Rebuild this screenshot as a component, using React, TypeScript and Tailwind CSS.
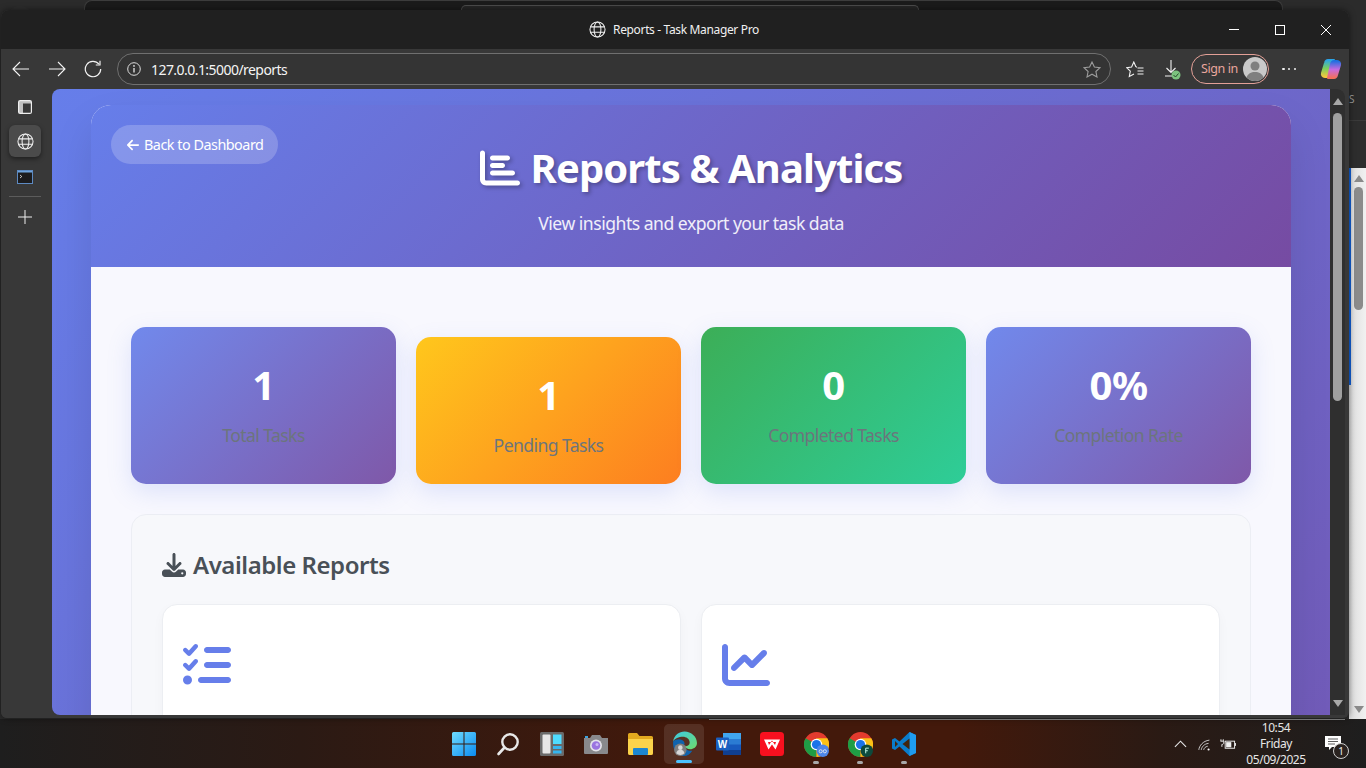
import React from "react";
import { FaArrowLeft, FaChartBar, FaChartLine, FaDownload, FaListCheck } from "react-icons/fa6";

const Globe = ({ size = 18 }: { size?: number }) => (
  <svg width={size} height={size} viewBox="0 0 18 18" fill="none" stroke="currentColor" strokeWidth="1.1">
    <circle cx="9" cy="9" r="8" />
    <ellipse cx="9" cy="9" rx="3.6" ry="8" />
    <path d="M1.6 6.2h14.8M1.6 11.8h14.8" />
  </svg>
);

const Tray = () => (
  <div className="flex items-center h-full text-white ml-auto">
    <svg width="13" height="8" viewBox="0 0 14 8" fill="none" stroke="#e8e8e8" strokeWidth="1.2" className="mr-[11px]">
      <path d="M1 7l6-6 6 6" />
    </svg>
    <svg width="13" height="12" viewBox="0 0 16 14" fill="none" stroke="#d8d8d8" strokeWidth="1.1" className="mr-[9px] mt-[2px]">
      <path d="M1 13C1.500 8 6 2 14 1M4 13c.5-3.500 3.500-7.500 9-8M7 13c.3-2 2-4 5-4.500" />
      <circle cx="13" cy="12.500" r="1.300" fill="#fff" stroke="none" />
    </svg>
    <svg width="16" height="12" viewBox="0 0 17 12" fill="none" stroke="#f0f0f0" strokeWidth="1" className="mr-[8px]">
      <rect x="5.500" y="3" width="10" height="7.500" />
      <rect x="6.500" y="4" width="5.500" height="5.500" fill="#f0f0f0" stroke="none" />
      <path d="M16.500 5v3M1 1v2M3.500 1v2M.5 3h3.500v2c0 1-1 1.500-2 1.500V9" />
    </svg>
    <div className="w-[64px] flex flex-col items-center text-[12px] leading-[16px] text-[#e6e6e6] whitespace-nowrap tracking-[-0.45px]">
      <span>10:54</span>
      <span>Friday</span>
      <span>05/09/2025</span>
    </div>
    <div className="relative w-[28px] h-[24px] ml-[15px] mr-[15px]">
      <svg width="16" height="15" viewBox="0 0 16 15" className="absolute left-[2px] top-[4px]">
        <path d="M0 0h16v11H7l-3 3v-3H0z" fill="#fff" />
        <path d="M3 3h10M3 5.500h10M3 8h7" stroke="#333" strokeWidth="0.8" />
      </svg>
      <span className="absolute left-[10px] top-[11px] w-[16px] h-[16px] rounded-full border border-[#cfcfcf] bg-[#2a2320] text-[10px] leading-[14px] text-center text-[#eee]">1</span>
    </div>
  </div>
);

const TaskIcon = ({ children, active, dot }: { children: React.ReactNode; active?: boolean; dot?: boolean }) => (
  <div className="relative w-[44px] h-[49px] flex items-center justify-center">
    {active && <div className="absolute left-[2px] top-[5px] w-[40px] h-[40px] rounded-[5px] bg-white/10" />}
    <div className="relative mt-[1px] flex">{children}</div>
    {active && <div className="absolute left-[14px] top-[41px] w-[16px] h-[3px] rounded-full bg-[#4cc2ff]" />}
    {dot && <div className="absolute left-[19px] top-[42px] w-[6px] h-[3px] rounded-full bg-[#a8a8a8]" />}
  </div>
);

const Chrome = ({ badge }: { badge: React.ReactNode }) => (
  <svg width="25" height="25" viewBox="0 0 24 24">
    <circle cx="12" cy="12" r="12" fill="#e33b2e" />
    <path d="M12 24A12 12 0 0 1 1.600 6L12 12z" fill="#1f9d45" />
    <path d="M12 24a12 12 0 0 0 10.400-18H12z" fill="#fbc116" />
    <circle cx="12" cy="12" r="5.600" fill="#fff" />
    <circle cx="12" cy="12" r="4.400" fill="#1b73e8" />
    {badge}
  </svg>
);

const TaskBar = () => (
  <div className="relative h-[49px] flex items-center bg-[linear-gradient(90deg,#1e1e1e_0%,#2b1a14_22%,#43190b_50%,#43190b_70%,#2a1a14_85%,#1e1e1e_100%)]">
    <div className="absolute left-[709px] right-[21px] top-0 h-px bg-[#8a8a8a]" />
    <div className="w-[442px] shrink-0" />
    <TaskIcon>
      <svg width="24" height="24" viewBox="0 0 24 24">
        <defs>
          <linearGradient id="win" x1="0" y1="0" x2="1" y2="1">
            <stop offset="0" stopColor="#6fdcff" />
            <stop offset="1" stopColor="#0a8bf0" />
          </linearGradient>
        </defs>
        <path d="M0 1.500A1.500 1.500 0 0 1 1.500 0h10v11.500H0zM12.500 0h10A1.500 1.500 0 0 1 24 1.500v10H12.500zM0 12.500h11.500V24h-10A1.500 1.500 0 0 1 0 22.500zM12.500 12.500H24v10a1.500 1.500 0 0 1-1.500 1.500h-10z" fill="url(#win)" />
      </svg>
    </TaskIcon>
    <TaskIcon>
      <svg width="24" height="24" viewBox="0 0 24 24" fill="none">
        <circle cx="14" cy="10" r="7.700" stroke="#e8e8e8" strokeWidth="2.400" />
        <path d="M8.500 15.500L2.500 22" stroke="#e8e8e8" strokeWidth="2.600" strokeLinecap="round" />
      </svg>
    </TaskIcon>
    <TaskIcon>
      <svg width="24" height="24" viewBox="0 0 24 24">
        <rect width="24" height="24" rx="1.500" fill="#6a6a6a" />
        <rect x="2.500" y="2.500" width="8" height="19" rx="1" fill="#e6e6e6" />
        <rect x="13" y="2.500" width="8.500" height="9.500" fill="#4fdcff" />
        <rect x="13" y="14" width="8.500" height="3" fill="#35b6f0" />
        <rect x="13" y="18.500" width="8.500" height="3" fill="#35b6f0" />
      </svg>
    </TaskIcon>
    <TaskIcon>
      <svg width="24" height="22" viewBox="0 0 24 22">
        <path d="M0 5h6l2-3h8l2 3h6v15a1 1 0 0 1-1 1H1a1 1 0 0 1-1-1z" fill="#88898c" />
        <path d="M1 3h3v2H1z" fill="#3ba4e0" />
        <circle cx="12" cy="12.500" r="6" fill="#e3e3e8" />
        <circle cx="12" cy="12.500" r="4.300" fill="#9a74e0" />
        <circle cx="13" cy="11.500" r="1.500" fill="#cbb8f5" />
      </svg>
    </TaskIcon>
    <TaskIcon>
      <svg width="25" height="22" viewBox="0 0 25 22">
        <path d="M0 1.500A1.500 1.500 0 0 1 1.500 0H9l2.500 3H23.500A1.500 1.500 0 0 1 25 4.500V20a2 2 0 0 1-2 2H2a2 2 0 0 1-2-2z" fill="#e2a91f" />
        <path d="M0 6h25v14a2 2 0 0 1-2 2H2a2 2 0 0 1-2-2z" fill="#fbd34b" />
        <rect x="5" y="15" width="15" height="7" rx="1" fill="#1c86d1" />
      </svg>
    </TaskIcon>
    <TaskIcon active>
      <svg width="25" height="26" viewBox="0 0 24 25">
        <defs>
          <linearGradient id="edge" x1="0" y1="0" x2="1" y2="1">
            <stop offset="0" stopColor="#3bc9e6" />
            <stop offset="1" stopColor="#6fdc6a" />
          </linearGradient>
        </defs>
        <path d="M1 10C2 4 7 .5 12 .5c6.500 0 12 5 12 11 0 4-3.500 6-6.500 6-2.500 0-5-1-5.500-3 2 .5 5-.5 5-3.500 0-3.500-3.500-5.500-6.500-5.500-4 0-8 2-9.500 4.500z" fill="url(#edge)" />
        <path d="M1 10c3-3 10-3 11 1.500.3 1-.5 2-.5 3 .5 3 4 5 8 4.500-2 3.500-5 5-8 5-6 0-11-5-10.500-14z" fill="#0f63ad" />
        <circle cx="8" cy="18" r="6" fill="#7e7e7e" />
        <circle cx="8" cy="16" r="2.200" fill="#d8d8d8" />
        <path d="M4 21.500c.5-2.500 2-3.500 4-3.500s3.500 1 4 3.500a6 6 0 0 1-8 0z" fill="#d8d8d8" />
      </svg>
    </TaskIcon>
    <TaskIcon>
      <svg width="25" height="24" viewBox="0 0 25 24">
        <rect x="7" y="1" width="18" height="22" rx="1" fill="#185abd" />
        <rect x="7" y="1" width="18" height="6" fill="#41a5ee" />
        <rect x="7" y="7" width="18" height="5.500" fill="#2b7cd3" />
        <rect x="7" y="18" width="18" height="5" fill="#103f91" />
        <rect x="0" y="5.500" width="13" height="13" rx="1" fill="#1a5fc0" />
        <text x="6.500" y="15.500" textAnchor="middle" fontSize="10" fontWeight="700" fill="#fff" fontFamily="'Liberation Sans',sans-serif">W</text>
      </svg>
    </TaskIcon>
    <TaskIcon>
      <svg width="24" height="24" viewBox="0 0 24 24">
        <rect width="24" height="24" rx="3.500" fill="#f8101f" />
        <path d="M4 7.500h16l-4.500 10-3.500-5-3.500 5zM8 10l1 3 3-4.500 3 4.500 1-3z" fill="#fff" fillRule="evenodd" />
      </svg>
    </TaskIcon>
    <TaskIcon dot>
      <Chrome badge={<><circle cx="18" cy="18" r="6" fill="#4d86e8" /><circle cx="16" cy="18.500" r="1.500" fill="none" stroke="#eee" strokeWidth="0.800" /><circle cx="20" cy="18.500" r="1.500" fill="none" stroke="#eee" strokeWidth="0.800" /></>} />
    </TaskIcon>
    <TaskIcon dot>
      <Chrome badge={<><circle cx="18" cy="18" r="6" fill="#0d4a3c" /><path d="M17 15.500h3M17 15.500v5M17 18h2" stroke="#cfe" strokeWidth="0.900" fill="none" /></>} />
    </TaskIcon>
    <TaskIcon dot>
      <svg width="24" height="24" viewBox="0 0 24 24">
        <path d="M17.500 0L24 3v18l-6.500 3-10-9.500L3 18l-3-1.500v-9L3 6l4.500 3.500z" fill="#0a7ccb" />
        <path d="M17.500 0L24 3v18l-6.500 3z" fill="#1f9cf0" />
        <path d="M17.500 6.500L10.500 12l7 5.500z" fill="#41250d" />
        <path d="M3 9v6l3-3z" fill="#41250d" />
      </svg>
    </TaskIcon>
    <Tray />
  </div>
);

const StatCard = ({ value, label, tone, shifted }: { value: string; label: string; tone: string; shifted?: boolean }) => (
  <div className={`flex flex-col items-center rounded-[15px] pt-[26px] shadow-[0_8px_25px_rgba(102,126,234,0.18)] ${tone} ${shifted ? "mt-[10px] h-[147px]" : "h-[157px]"}`}>
    <div className="text-[40px] leading-[64px] font-bold text-white tracking-[-0.5px]">{value}</div>
    <div className="mt-[4px] text-[17.6px] leading-[28px] text-[#6c757d] tracking-[-0.6px]">{label}</div>
  </div>
);

const ReportCard = ({ children }: { children: React.ReactNode }) => (
  <div className="h-[140px] rounded-[15px] border border-[#eceef2] bg-white shadow-[0_4px_12px_rgba(0,0,0,0.03)] pt-[36px] pl-[20px] text-[48px] text-[#667eea]">
    {children}
  </div>
);

const Page = () => (
  <div className="h-[1500px] bg-[linear-gradient(135deg,#667eea_0%,#764ba2_100%)] pt-[16px]">
    <div className="mx-auto w-[1200px] rounded-[20px] bg-[#f8f8fe] shadow-[0_20px_40px_rgba(0,0,0,0.1)] overflow-hidden">
      <header className="relative h-[162px] bg-[linear-gradient(135deg,#667eea_0%,#764ba2_100%)] flex flex-col items-center text-white">
        <a className="absolute left-[20px] top-[20px] h-[39px] w-[167px] rounded-[25px] bg-white/20 flex items-center pl-[15px] gap-[4px] text-[14.4px] tracking-[-0.5px]">
          <FaArrowLeft className="text-[14px]" />
          <span>Back to Dashboard</span>
        </a>
        <h1 className="mt-[33px] flex items-center text-[40px] leading-[60px] font-bold tracking-[-0.9px] [text-shadow:2px_2px_4px_rgba(0,0,0,0.3)]">
          <FaChartBar className="text-[40px] mr-[11px] drop-shadow-[2px_2px_2px_rgba(0,0,0,0.3)]" />
          <span>Reports &amp; Analytics</span>
        </h1>
        <p className="mt-[12px] text-[17.6px] leading-[26px] text-white/90 tracking-[-0.5px]">View insights and export your task data</p>
      </header>
      <main className="px-[40px] pt-[60px]">
        <div className="grid grid-cols-4 gap-[20px]">
          <StatCard value="1" label="Total Tasks" tone="bg-[linear-gradient(135deg,#7189ec,#7f58a8)]" />
          <StatCard value="1" label="Pending Tasks" tone="bg-[linear-gradient(135deg,#ffc71c,#fd7e20)]" shifted />
          <StatCard value="0" label="Completed Tasks" tone="bg-[linear-gradient(135deg,#3cae57,#2ecd98)]" />
          <StatCard value="0%" label="Completion Rate" tone="bg-[linear-gradient(135deg,#7189ec,#7f58a8)]" />
        </div>
        <section className="mt-[30px] h-[400px] rounded-[15px] border border-[#eceef4] bg-[#f7f8fb] px-[30px] pt-[30px]">
          <h2 className="flex items-center h-[40px] text-[24px] font-semibold text-[#495057] tracking-[-0.45px]">
            <FaDownload className="text-[24px] mr-[7px]" />
            <span>Available Reports</span>
          </h2>
          <div className="mt-[19px] grid grid-cols-2 gap-[20px]">
            <ReportCard><FaListCheck /></ReportCard>
            <ReportCard><FaChartLine /></ReportCard>
          </div>
        </section>
      </main>
    </div>
  </div>
);

const ToolBtn = ({ children, w = 36 }: { children: React.ReactNode; w?: number }) => (
  <div className="flex items-center justify-center h-full" style={{ width: w }}>{children}</div>
);

const Toolbar = () => (
  <div className="h-[40px] bg-[#383838] flex items-center pl-[2px] text-[#f2f2f2]">
    <ToolBtn>
      <svg width="18" height="16" viewBox="0 0 18 16" fill="none" stroke="currentColor" strokeWidth="1.100"><path d="M17 8H1M8 1L1 8l7 7" /></svg>
    </ToolBtn>
    <ToolBtn>
      <svg width="18" height="16" viewBox="0 0 18 16" fill="none" stroke="currentColor" strokeWidth="1.100"><path d="M1 8h16M10 1l7 7-7 7" /></svg>
    </ToolBtn>
    <ToolBtn>
      <svg width="18" height="18" viewBox="0 0 18 18" fill="none" stroke="currentColor" strokeWidth="1.200"><path d="M15 4.200A7.700 7.700 0 1 0 16.700 9" /><path d="M16 .8v4.200h-4.200" /></svg>
    </ToolBtn>
    <div className="ml-[6px] w-[994px] h-[32px] rounded-full border border-[#707070] bg-[#343434] flex items-center pl-[9px] pr-[9px]">
      <svg width="14" height="14" viewBox="0 0 14 14" fill="none" stroke="#dcdcdc" strokeWidth="1"><circle cx="7" cy="7" r="6.300" /><path d="M7 6v4.500" strokeWidth="1.400" /><circle cx="7" cy="3.900" r=".9" fill="#dcdcdc" stroke="none" /></svg>
      <span className="ml-[10px] text-[14px] text-[#f4f4f4] tracking-[-0.55px]">127.0.0.1:5000/reports</span>
      <svg className="ml-auto" width="18" height="17" viewBox="0 0 18 17" fill="none" stroke="#9c9c9c" strokeWidth="1.100"><path d="M9 1l2.400 5 5.600.7-4.100 3.800 1.100 5.500-5-2.800L4 16l1.100-5.500L1 6.700 6.600 6z" /></svg>
    </div>
    <div className="w-[14px]" />
    <ToolBtn w={20}>
      <svg width="18" height="17" viewBox="0 0 18 17" fill="none" stroke="#f2f2f2" strokeWidth="1.100"><path d="M10 6L7.800 1 5.600 6 .7 6.600l3.600 3.500-1 5.300L8 13" /><path d="M10 6h1M11.500 7h6M11.500 10h6M11.500 13h6" /></svg>
    </ToolBtn>
    <div className="w-[17px]" />
    <div className="relative w-[20px] h-full">
      <svg className="absolute left-[2px] top-[11px]" width="14" height="18" viewBox="0 0 14 18" fill="none" stroke="#f2f2f2" strokeWidth="1.100"><path d="M7 0v12M2.500 8L7 12.500 11.500 8M1 16h7" /></svg>
      <svg className="absolute left-[9px] top-[21px]" width="10" height="10" viewBox="0 0 10 10"><circle cx="5" cy="5" r="4.500" fill="#7cc47f" /><path d="M2.500 5l2 2 3-3.500" stroke="#254d29" strokeWidth="1" fill="none" /></svg>
    </div>
    <div className="ml-[9px] w-[78px] h-[30px] rounded-full border border-[#e3a097] flex items-center pl-[9px] pr-[1px]">
      <span className="text-[12.5px] text-[#e9a79e] tracking-[-0.4px]">Sign in</span>
      <svg className="ml-auto" width="24" height="24" viewBox="0 0 24 24"><circle cx="12" cy="12" r="12" fill="#c9c9c9" /><circle cx="12" cy="9" r="4.500" fill="#7f7f7f" /><path d="M3.500 20.500C5 16.500 8 15 12 15s7 1.500 8.500 5.500A12 12 0 0 1 3.500 20.500z" fill="#7f7f7f" /></svg>
    </div>
    <div className="ml-[13px] w-[14px] flex justify-between">
      <span className="w-[2.500px] h-[2.500px] rounded-full bg-[#f2f2f2]" />
      <span className="w-[2.500px] h-[2.500px] rounded-full bg-[#f2f2f2]" />
      <span className="w-[2.500px] h-[2.500px] rounded-full bg-[#f2f2f2]" />
    </div>
    <svg className="ml-[24px]" width="22" height="22" viewBox="0 0 22 22">
      <defs>
        <linearGradient id="cp1" x1="0" y1="0" x2="0" y2="1"><stop offset="0" stopColor="#2aa4e8" /><stop offset="0.5" stopColor="#7ccf5c" /><stop offset="1" stopColor="#f6c83e" /></linearGradient>
        <linearGradient id="cp2" x1="0" y1="0" x2="0" y2="1"><stop offset="0" stopColor="#1d6fe0" /><stop offset="0.5" stopColor="#c66be0" /><stop offset="1" stopColor="#f4705a" /></linearGradient>
      </defs>
      <path d="M8 2h6l-3 14c-.5 2-1.500 3-3 3H5c-2.500 0-3.500-2-3-4L5 5c.5-2 1.500-3 3-3z" fill="url(#cp1)" stroke="url(#cp1)" strokeWidth="2" strokeLinejoin="round" />
      <path d="M14 20H8l3-14c.5-2 1.500-3 3-3h3c2.500 0 3.500 2 3 4l-3 10c-.5 2-1.500 3-3 3z" fill="url(#cp2)" stroke="url(#cp2)" strokeWidth="2" strokeLinejoin="round" />
    </svg>
  </div>
);

const Sidebar = () => (
  <div className="w-[51px] shrink-0 bg-[#383838] flex flex-col items-center pr-[3px] text-[#f0f0f0]">
    <div className="h-[36px] flex items-center">
      <svg width="14" height="14" viewBox="0 0 14 14" fill="none" stroke="#eee" strokeWidth="1.200">
        <rect x=".6" y=".6" width="12.800" height="12.800" rx="1.500" />
        <path d="M1 1h12v2.500H5V13H1z" fill="#eee" fillOpacity=".75" stroke="none" />
      </svg>
    </div>
    <div className="w-[32px] h-[32px] rounded-[6px] bg-[#4b4b4b] shadow-[0_2px_5px_rgba(0,0,0,0.45)] flex items-center justify-center">
      <Globe size={17} />
    </div>
    <div className="mt-[9px] h-[22px] flex items-center">
      <svg width="16" height="14" viewBox="0 0 16 14">
        <rect x=".5" y=".5" width="15" height="13" fill="#1c1c1e" stroke="#5d8ac2" />
        <rect x="1" y="1" width="14" height="1.500" fill="#6ea3dc" />
        <path d="M3 5l1.800 1.500L3 8" stroke="#eee" strokeWidth=".8" fill="none" />
      </svg>
    </div>
    <div className="mt-[8px] w-[32px] h-px bg-[#5c5c5c]" />
    <svg className="mt-[13px]" width="14" height="14" viewBox="0 0 14 14" stroke="#eee" strokeWidth="1"><path d="M7 0v14M0 7h14" /></svg>
  </div>
);

const Behind = () => (
  <>
    <div className="absolute left-[84px] top-0 w-[1199px] h-[12px] bg-[#1b1b1b] rounded-t-[8px] border-t border-l border-r border-[#3c3c3c]" />
    <div className="absolute left-[461px] top-[5px] w-[458px] h-[8px] bg-[#262626] rounded-t-[5px] border-t border-l border-r border-[#4a4a4a]" />
    <div className="absolute left-[7px] top-[6px] w-[26px] h-[26px] rounded-full bg-[#2e2e2e]" />
    <div className="absolute left-[1349px] top-0 w-[17px] h-[719px] flex flex-col bg-[#2b2b2b]">
      <div className="h-[120px] pt-[91px] pl-0 text-[10px] leading-[16px] text-[#999]">S</div>
      <div className="h-[48px] bg-[#2d2d2d] border-t border-[#3a3a3a]" />
      <div className="flex-1 relative bg-[linear-gradient(90deg,#dcdcdc,#f1f1f1)]">
        <div className="absolute left-0 top-0 w-[2px] h-[217px] bg-[#1160d8]" />
        <div className="absolute left-[5px] top-[7px] w-0 h-0 border-l-[5px] border-r-[5px] border-b-[7px] border-l-transparent border-r-transparent border-b-[#8a8a8a]" />
        <div className="absolute left-[5px] top-[19px] w-[9px] h-[123px] rounded-full bg-[#8b8b8b]" />
        <div className="absolute left-[5px] bottom-[6px] w-0 h-0 border-l-[5px] border-r-[5px] border-t-[7px] border-l-transparent border-r-transparent border-t-[#8a8a8a]" />
      </div>
    </div>
  </>
);

const Scrollbar = () => (
  <div className="w-[15px] shrink-0 bg-[#2f2f2f] rounded-tr-[8px] flex flex-col items-center pt-[9px] pb-[8px]">
    <div className="w-0 h-0 border-l-[5px] border-r-[5px] border-b-[7px] border-l-transparent border-r-transparent border-b-[#a8a8a8]" />
    <div className="mt-[8px] w-[9px] h-[288px] rounded-full bg-[#a0a0a0]" />
    <div className="mt-auto w-0 h-0 border-l-[5px] border-r-[5px] border-t-[7px] border-l-transparent border-r-transparent border-t-[#a8a8a8]" />
  </div>
);

export default function App() {
  return (
    <div className="relative w-[1366px] h-[768px] overflow-hidden bg-[#2b2b2b] font-['Noto_Sans','Open_Sans',sans-serif]">
      <div className="h-[719px]" />
      <TaskBar />
      <Behind />
      <div className="absolute left-[1px] top-[10px] w-[1348px] h-[708px] rounded-t-[8px] rounded-b-[6px] overflow-hidden bg-[#383838] flex flex-col shadow-[0_0_6px_rgba(0,0,0,0.5)]">
        <div className="relative h-[39px] shrink-0 bg-[#202020] flex items-center justify-center text-[#f0f0f0] text-[12px]">
          <div className="flex items-center gap-[7px] -ml-[2px]">
            <Globe size={17} />
            <span className="tracking-[-0.35px]">Reports - Task Manager Pro</span>
          </div>
          <div className="absolute right-[18px] top-0 h-full flex items-center gap-[36px]">
            <div className="w-[10px] h-px bg-white" />
            <div className="w-[10px] h-[10px] border border-white" />
            <svg width="10" height="10" viewBox="0 0 10 10" stroke="#fff" strokeWidth="1"><path d="M0 0l10 10M10 0L0 10" /></svg>
          </div>
        </div>
        <Toolbar />
        <div className="flex-1 min-h-0 flex">
          <Sidebar />
          <div className="flex-1 min-w-0 flex h-[626px] mr-[4px] rounded-tl-[8px] rounded-bl-[8px] rounded-tr-[8px] overflow-hidden">
            <div className="flex-1 min-w-0 overflow-hidden"><Page /></div>
            <Scrollbar />
          </div>
        </div>
      </div>
    </div>
  );
}
